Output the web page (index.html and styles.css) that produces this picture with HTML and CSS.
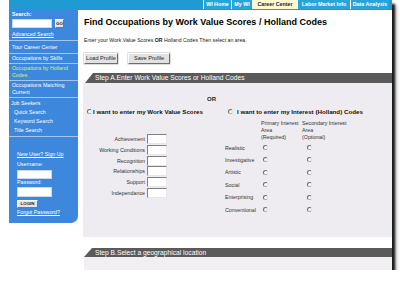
FILE: index.html
```html
<!DOCTYPE html>
<html>
<head>
<meta charset="utf-8">
<title>Find Occupations</title>
<link rel="stylesheet" href="styles.css">
</head>
<body>
<div class="page">
  <div class="topbar">
    <a class="tab t1">WI Home</a>
    <a class="tab t2">My WI</a>
    <a class="tab t3 active">Career Center</a>
    <a class="tab t4">Labor Market Info</a>
    <a class="tab t5">Data Analysis</a>
  </div>
  <div class="body">
    <aside class="side">
      <div class="search">
        <div class="lbl">Search:</div>
        <div class="srow"><span class="sinput"></span><span class="gobtn">GO</span></div>
        <a class="adv">Advanced Search</a>
      </div>
      <div class="sep"></div>
      <div class="item first">Tour Career Center</div>
      <div class="sep"></div>
      <div class="item">Occupations by Skills</div>
      <div class="sep"></div>
      <div class="item cur">Occupations by Holland<br>Codes</div>
      <div class="sep"></div>
      <div class="item">Occupations Matching<br>Current</div>
      <div class="sep"></div>
      <div class="group">
        <div class="gl">Job Seekers</div>
        <div class="gl sub">Quick Search</div>
        <div class="gl sub">Keyword Search</div>
        <div class="gl sub">Title Search</div>
      </div>
      <div class="sep"></div>
      <div class="login">
        <a class="ul">New User? Sign Up</a>
        <div class="ll">Username:</div>
        <span class="linput"></span>
        <div class="ll">Password:</div>
        <span class="linput pw"></span>
        <span class="loginbtn">LOGIN</span>
        <a class="ul forgot">Forgot Password?</a>
      </div>
    </aside>
    <main class="main">
      <h1>Find Occupations by Work Value Scores / Holland Codes</h1>
      <p class="intro">Enter your Work Value Scores <b>OR</b> Holland Codes Then select an area.</p>
      <div class="btns"><span class="btn b1">Load Profile</span><span class="btn b2">Save Profile</span></div>
      <div class="step a">Step A.Enter Work Value Scores or Holland Codes</div>
      <div class="panel">
        <div class="or">OR</div>
        <div class="cols">
          <div class="col1">
            <div class="choice"><span class="radio"></span>I want to enter my Work Value Scores</div>
            <div class="wv">
              <div class="wvrow"><span class="wl">Achievement</span><span class="inp"></span></div>
              <div class="wvrow"><span class="wl">Working Conditions</span><span class="inp"></span></div>
              <div class="wvrow"><span class="wl">Recognition</span><span class="inp"></span></div>
              <div class="wvrow"><span class="wl">Relationships</span><span class="inp"></span></div>
              <div class="wvrow"><span class="wl">Support</span><span class="inp"></span></div>
              <div class="wvrow"><span class="wl">Independance</span><span class="inp"></span></div>
            </div>
          </div>
          <div class="col2">
            <div class="choice c2"><span class="radio"></span>I want to enter my Interest (Holland) Codes</div>
            <div class="hgrid">
              <span class="hc"></span>
              <span class="hh">Primary Interest<br>Area<br>(Required)</span>
              <span class="hh">Secondary Interest<br>Area<br>(Optional)</span>

              <span class="hl">Realistic</span><span class="hr p"><span class="radio"></span></span><span class="hr s"><span class="radio"></span></span>
              <span class="hl">Investigative</span><span class="hr p"><span class="radio"></span></span><span class="hr s"><span class="radio"></span></span>
              <span class="hl">Artistic</span><span class="hr p"><span class="radio"></span></span><span class="hr s"><span class="radio"></span></span>
              <span class="hl">Social</span><span class="hr p"><span class="radio"></span></span><span class="hr s"><span class="radio"></span></span>
              <span class="hl">Enterprising</span><span class="hr p"><span class="radio"></span></span><span class="hr s"><span class="radio"></span></span>
              <span class="hl">Conventional</span><span class="hr p"><span class="radio"></span></span><span class="hr s"><span class="radio"></span></span>
            </div>
          </div>
        </div>
      </div>
      <div class="step b">Step B.Select a geographical location</div>
      <div class="tail"></div>
    </main>
  </div>
</div>
</body>
</html>
```

FILE: styles.css
```css
* { box-sizing: border-box; margin: 0; padding: 0; }
body { margin: 0; background: #fff; font-family: "Liberation Sans", Arial, sans-serif; }

.page {
  margin-left: 9px;
  width: 383px;
  height: 270px;
  background: #fff;
  box-shadow: 3px 4px 2px rgba(0, 0, 0, 0.85), 4px 5px 4px rgba(0, 0, 0, 0.35);
  overflow: hidden;
}

/* top navigation */
.topbar {
  height: 10px;
  background: #1f9ad2;
  display: flex;
  justify-content: flex-end;
  padding-right: 3px;
}
.tab {
  height: 9px;
  border-left: 1px solid #fff;
  background: #27a4d9;
  color: #fff;
  font-weight: bold;
  font-size: 5.3px;
  line-height: 9px;
  text-align: center;
  white-space: nowrap;
}
.t1 { width: 28px; }
.t2 { width: 21px; }
.t3 { width: 45px; }
.t4 { width: 53px; }
.t5 { width: 39px; }
.tab.active { background: #fdf9d4; color: #222; }

.body { display: flex; align-items: flex-start; }

/* sidebar */
.side {
  width: 69px;
  height: 213px;
  flex: none;
  background: #3d87dd;
  border-bottom-right-radius: 7px;
  color: #fff;
  font-size: 5.3px;
  line-height: 7px;
  white-space: nowrap;
}
.search { padding: 1px 3px 2px; }
.lbl { font-weight: bold; }
.srow { display: flex; gap: 3px; margin-top: 1px; height: 9px; }
.sinput { width: 40px; height: 9px; background: #fff; border: 1px solid #c9d9ec; }
.gobtn {
  width: 9px; height: 9px;
  background: #e6e6e6; color: #222;
  font-weight: bold; font-size: 4.4px; line-height: 7px; text-align: center;
  border: 1px solid; border-color: #fff #777 #777 #fff;
}
.adv { display: block; margin-top: 3px; text-decoration: underline; }
.sep { height: 1px; background: #a3c6f0; }
.item { padding: 1px 3px; }
.item.first { padding: 3px 3px 2px; }
.item.cur { color: #d3f27c; }
.group { padding: 1px 0 1px 2px; line-height: 9px; }
.gl.sub { padding-left: 3px; }
.login { padding: 14px 0 0 8px; }
.ul { display: block; text-decoration: underline; }
.ll { margin-top: 3px; }
.ll + .linput { margin-top: 2px; }
.linput { display: block; width: 35px; height: 9px; background: #fff; border: 1px solid #c9d9ec; }
.linput.pw { height: 10px; margin-top: 1px !important; }
.ll:nth-of-type(2) { margin-top: 0; }
.loginbtn {
  display: block; width: 21px; height: 8px; margin-top: 3px;
  background: #e6e6e6; color: #222;
  font-weight: bold; font-size: 4.4px; line-height: 6px; text-align: center;
  border: 1px solid; border-color: #fff #777 #777 #fff;
}
.forgot { margin-top: 1px; }

/* main */
.main { flex: 1; min-width: 0; color: #000; }
h1 {
  font-size: 9px; font-weight: bold; line-height: 10px;
  margin: 7px 0 0 6px; white-space: nowrap;
}
.intro { font-size: 5.2px; line-height: 6px; margin: 10px 0 0 6px; color: #222; white-space: nowrap; }
.btns { display: flex; gap: 10px; margin: 10px 0 0 6px; }
.btn {
  height: 11px;
  background: #e2e2e2;
  border: 1px solid; border-color: #fff #6e6e6e #6e6e6e #fff;
  box-shadow: 0 0 0 0.5px #bbb;
  font-size: 5.6px; line-height: 9px; text-align: center; color: #222;
  white-space: nowrap;
}
.b1 { width: 34px; }
.b2 { width: 42px; }

.step {
  background: #5a5a5a;
  color: #fff;
  font-size: 6.7px;
  white-space: nowrap;
  clip-path: polygon(8px 0, 100% 0, 100% 100%, 0 100%);
}
.step.a { height: 10px; line-height: 10px; margin: 9px 0 0 7px; padding-left: 10px; }
.step.b { height: 9px; line-height: 9px; margin: 11px 0 0 6px; padding-left: 11px; }
.tail { height: 13px; margin-left: 6px; background: #f1eff1; }

.panel {
  height: 154px;
  margin-left: 5px;
  background: #eeecf0;
  padding-top: 13px;
  font-size: 5.3px;
  color: #333;
}
.or { font-weight: bold; font-size: 6px; line-height: 6px; padding-left: 124px; color: #222; }
.cols { display: flex; margin-top: 6px; }
.col1 { width: 141px; flex: none; }
.col2 { flex: 1; }
.choice {
  display: flex; align-items: center;
  height: 7px; padding-left: 4px;
  font-weight: bold; font-size: 6.2px; color: #111;
  white-space: nowrap;
}
.radio {
  display: block;
  width: 5px; height: 5px; flex: none;
  border-radius: 50%;
  background: #fff;
  border: 1px solid; border-color: #6a6a6a #e2e2e2 #a8a8a8 #6a6a6a;
}
.choice .radio { margin-right: 1px; }
.c2 .radio { margin-right: 4px; }

.wv { margin-top: 18.6px; }
.wvrow { display: flex; align-items: center; height: 10.8px; }
.wl { width: 62px; text-align: right; white-space: nowrap; }
.inp {
  width: 20px; height: 10px; margin-left: 2px;
  background: #fff;
  border: 1px solid; border-color: #808080 #e6e6e6 #e6e6e6 #808080;
}

.hgrid {
  display: grid;
  grid-template-columns: 37px 41px 1fr;
  grid-template-rows: 21.9px repeat(6, 12.4px);
  margin-top: 4.5px;
}
.hh { line-height: 7.3px; white-space: nowrap; }
.hl { display: flex; align-items: center; padding-left: 1px; white-space: nowrap; }
.hr { display: flex; align-items: center; }
.hr.p .radio { margin-left: 2px; }
.hr.s .radio { margin-left: 5px; }
```
